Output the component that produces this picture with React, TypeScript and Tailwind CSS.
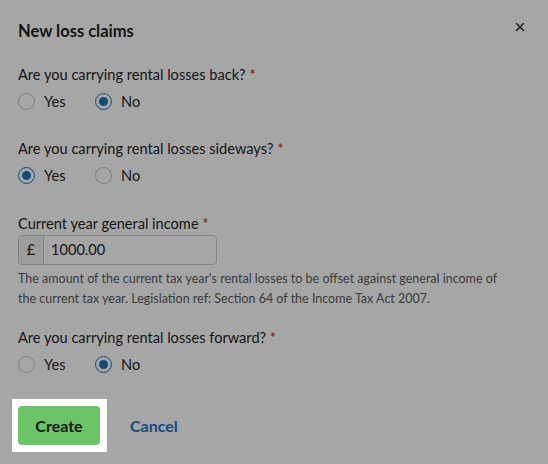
import { X } from "lucide-react";

function Radio({ label, checked }: { label: string; checked?: boolean }) {
  return (
    <label className="flex items-center gap-[9px] w-[77px]">
      <span
        className={
          "flex h-[17px] w-[17px] items-center justify-center rounded-full border " +
          (checked ? "border-[#134a78]" : "border-[#7d7d7d]")
        }
      >
        {checked && <span className="h-[9px] w-[9px] rounded-full bg-[#134a78]" />}
      </span>
      <span>{label}</span>
    </label>
  );
}

function Question({ label, value }: { label: string; value: "Yes" | "No" }) {
  return (
    <div className="flex flex-col">
      <div className="h-[22px] leading-[22px]">
        {label} <span className="text-[#7a0f0f]">*</span>
      </div>
      <div className="mt-[5px] flex h-[22px] items-center">
        <Radio label="Yes" checked={value === "Yes"} />
        <Radio label="No" checked={value === "No"} />
      </div>
    </div>
  );
}

export default function App() {
  return (
    <div
      className="h-[464px] w-[548px] overflow-hidden bg-[#a6a6a6] text-[14.6px] text-[#141414]"
      style={{ fontFamily: "Lato, 'Noto Sans', sans-serif" }}
    >
      <div className="flex items-center justify-between pl-[18px] pr-[21px] pt-[19px]">
        <h1 className="text-[16.5px] font-bold leading-[24px]">New loss claims</h1>
        <X className="-mt-[9px] h-[14px] w-[14px] text-[#1e2328]" strokeWidth={2.6} />
      </div>

      <div className="flex flex-col px-[18px] pt-[21px]">
        <Question label="Are you carrying rental losses back?" value="No" />
        <div className="mt-[25px]">
          <Question label="Are you carrying rental losses sideways?" value="Yes" />
        </div>

        <div className="mt-[26px] flex flex-col">
          <div className="h-[22px] leading-[22px]">
            Current year general income <span className="text-[#7a0f0f]">*</span>
          </div>
          <div className="flex h-[30px] w-[199px] overflow-hidden rounded-[4px] border border-[#848484]">
            <span className="flex w-[25px] items-center justify-center border-r border-[#848484] bg-[#9d9d9d]">
              £
            </span>
            <span className="flex items-center pl-[7px]">1000.00</span>
          </div>
          <p className="mt-[4px] max-w-[490px] text-[12.5px] leading-[20px] text-[#3a3a3a]">
            The amount of the current tax year's rental losses to be offset against general income of
            the current tax year. Legislation ref: Section 64 of the Income Tax Act 2007.
          </p>
        </div>

        <div className="mt-[18px]">
          <Question label="Are you carrying rental losses forward?" value="No" />
        </div>

        <div className="mt-[23px] flex items-center">
          <div className="-ml-[6px] bg-white py-[7px] pl-[6px] pr-[7px]">
            <button className="h-[39px] w-[82px] rounded-[4px] bg-[#6cc466] text-[16px] font-bold text-[#141414]">
              Create
            </button>
          </div>
          <button className="ml-[23px] text-[16px] font-bold text-[#144a80]">Cancel</button>
        </div>
      </div>
    </div>
  );
}
